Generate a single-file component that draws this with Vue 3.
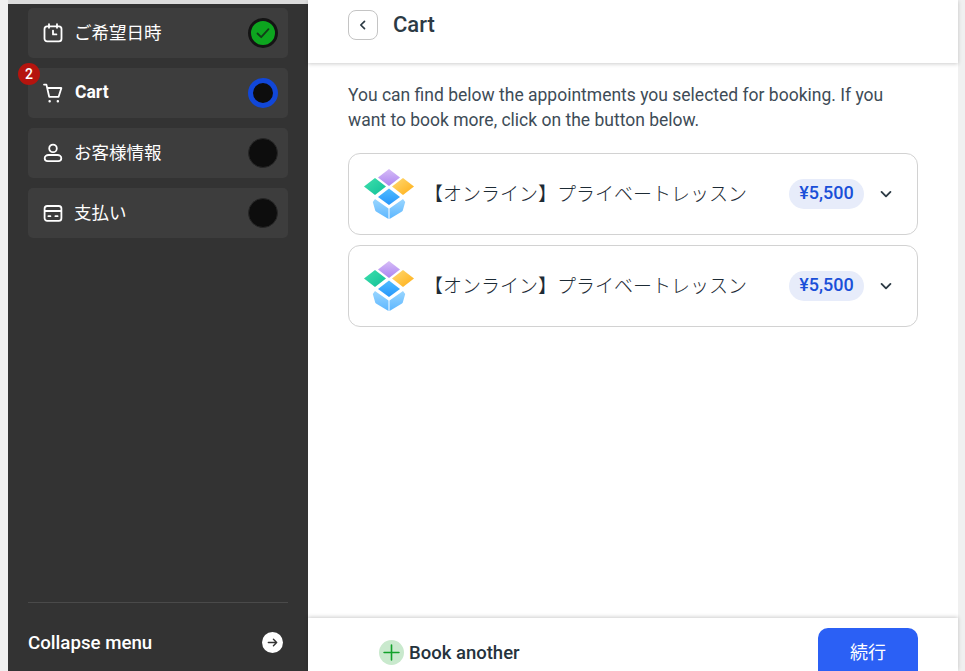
<template>
  <div class="page">
    <aside class="sidebar">
      <nav class="steps">
        <div v-for="step in steps" :key="step.label" class="step">
          <span v-if="step.badge" class="step__badge">{{ step.badge }}</span>
          <svg class="step__icon" viewBox="0 0 20 20" fill="none" stroke="currentColor" stroke-width="1.8" stroke-linecap="round" stroke-linejoin="round">
            <template v-if="step.icon === 'calendar'">
              <rect x="1.5" y="3.4" width="17" height="15" rx="2.6" />
              <path d="M6 1.2v3.6M14 1.2v3.6M10 7.6v3.8h3.4" />
            </template>
            <template v-else-if="step.icon === 'cart'">
              <path d="M1 1.6h2.4l2.8 12.2h9.400L18.400 5H4.400" />
              <path d="M6.600 18.200h.1M14.800 18.200h.1" stroke-width="2.400" />
            </template>
            <template v-else-if="step.icon === 'user'">
              <circle cx="10" cy="5.400" r="3.800" />
              <path d="M5.600 12h8.800c2.200 0 3.900 1.500 3.900 3.300 0 1.600-1.300 2.900-3 2.900H4.700c-1.700 0-3-1.300-3-2.900 0-1.800 1.700-3.300 3.900-3.300z" />
            </template>
            <template v-else>
              <rect x="1.600" y="3" width="16.800" height="14.800" rx="2.600" />
              <path d="M2 8h16M5.400 13.200h2M12.400 13.200h2.200" />
            </template>
          </svg>
          <span class="step__label" :class="{ 'step__label_active': step.state === 'active' }">{{ step.label }}</span>
          <span class="step__dot" :class="'step__dot_' + step.state">
            <svg v-if="step.state === 'done'" viewBox="0 0 20 20" fill="none" stroke="#123d18" stroke-width="1.800" stroke-linecap="round" stroke-linejoin="round">
              <path d="M4.500 10.500l3.700 3.700 7.300-8" />
            </svg>
          </span>
        </div>
      </nav>
      <div class="collapse">
        <span class="collapse__text">Collapse menu</span>
        <span class="collapse__icon">
          <svg viewBox="0 0 14 14" fill="none" stroke="#333" stroke-width="1.500" stroke-linecap="round" stroke-linejoin="round">
            <path d="M2.500 7h9M8 3.500L11.500 7 8 10.500" />
          </svg>
        </span>
      </div>
    </aside>

    <main class="main">
      <header class="header">
        <button class="back">
          <svg viewBox="0 0 12 12" fill="none" stroke="#2c3a44" stroke-width="1.700" stroke-linecap="round" stroke-linejoin="round">
            <path d="M7.500 2.300L3.800 6l3.700 3.700" />
          </svg>
        </button>
        <h1 class="header__title">Cart</h1>
      </header>

      <section class="content">
        <p class="intro">You can find below the appointments you selected for booking. If you want to book more, click on the button below.</p>
        <div class="cards">
          <div v-for="item in items" :key="item.id" class="card">
            <svg class="card__logo" viewBox="0 0 50 50">
              <defs>
                <linearGradient id="boxPurple" x1="0" y1="0" x2="0" y2="1">
                  <stop offset="0" stop-color="#d6bcf7" />
                  <stop offset="1" stop-color="#ad85f0" />
                </linearGradient>
                <linearGradient id="boxGreen" x1="0" y1="0" x2="1" y2="1">
                  <stop offset="0" stop-color="#3fe0ac" />
                  <stop offset="1" stop-color="#0fbf98" />
                </linearGradient>
                <linearGradient id="boxYellow" x1="0" y1="0" x2="1" y2="1">
                  <stop offset="0" stop-color="#ffdb75" />
                  <stop offset="1" stop-color="#ffad14" />
                </linearGradient>
                <linearGradient id="boxBlue" x1="0" y1="0" x2="0" y2="1">
                  <stop offset="0" stop-color="#4fbcff" />
                  <stop offset="1" stop-color="#2696fb" />
                </linearGradient>
                <linearGradient id="boxSide" x1="0" y1="0" x2="0" y2="1">
                  <stop offset="0" stop-color="#9ad6ff" />
                  <stop offset="1" stop-color="#5cb6ff" />
                </linearGradient>
              </defs>
              <path d="M25 0l11 8.500L25 17 14 8.500z" fill="url(#boxPurple)" />
              <path d="M11 9l11 8.500L11 26 0 17.500z" fill="url(#boxGreen)" />
              <path d="M39 9l11 8.500L39 26l-11-8.500z" fill="url(#boxYellow)" />
              <path d="M25 19.500L36 28 25 36 14 28z" fill="url(#boxBlue)" />
              <path d="M11 30l13.500 9.500V50L12 42.500q-.9-.6-1-1.700L8.800 33z" fill="url(#boxSide)" />
              <path d="M39 30l-13.500 9.500V50L38 42.500q.9-.6 1-1.700L41.200 33z" fill="url(#boxSide)" />
            </svg>
            <span class="card__name">{{ item.name }}</span>
            <span class="card__price">{{ item.price }}</span>
            <svg class="card__chevron" viewBox="0 0 12 12" fill="none" stroke="#2c3a44" stroke-width="1.600" stroke-linecap="round" stroke-linejoin="round">
              <path d="M2.200 4.200L6 8l3.800-3.800" />
            </svg>
          </div>
        </div>
      </section>

      <footer class="footer">
        <button class="another">
          <span class="another__icon">
            <svg viewBox="0 0 16 16" fill="none" stroke="#12a12a" stroke-width="1.500" stroke-linecap="round">
              <path d="M8 1v14M1 8h14" />
            </svg>
          </span>
          <span class="another__text">Book another</span>
        </button>
        <button class="next">続行</button>
      </footer>
    </main>
  </div>
</template>

<script setup>
const steps = [
  { label: 'ご希望日時', icon: 'calendar', state: 'done' },
  { label: 'Cart', icon: 'cart', state: 'active', badge: 2 },
  { label: 'お客様情報', icon: 'user', state: 'idle' },
  { label: '支払い', icon: 'card', state: 'idle' },
]

const items = [
  { id: 1, name: '【オンライン】プライベートレッスン', price: '¥5,500' },
  { id: 2, name: '【オンライン】プライベートレッスン', price: '¥5,500' },
]
</script>

<style>
html,
body {
  margin: 0;
  background: #f0f0f0;
}
</style>

<style scoped>
.page {
  display: flex;
  height: 671px;
  overflow: hidden;
  box-sizing: border-box;
  padding: 0 7px 0 8px;
  font-family: Roboto, "Noto Sans CJK JP", sans-serif;
  background: #f0f0f0;
}

.sidebar {
  display: flex;
  flex-direction: column;
  justify-content: space-between;
  flex: 0 0 300px;
  box-sizing: border-box;
  padding: 4px 20px 0;
  border-top: 4px solid #dcdcdc;
  background: #333333;
}

.steps {
  display: flex;
  flex-direction: column;
  gap: 10px;
}

.step {
  position: relative;
  display: flex;
  align-items: center;
  height: 50px;
  box-sizing: border-box;
  padding: 0 10px 0 15px;
  border-radius: 5px;
  background: #3d3d3d;
  color: #ffffff;
}

.step__badge {
  position: absolute;
  left: -10px;
  top: -5px;
  width: 22px;
  height: 22px;
  border-radius: 50%;
  background: #b5140e;
  color: #ffffff;
  font-size: 14px;
  font-weight: 500;
  line-height: 22px;
  text-align: center;
}

.step__icon {
  width: 20px;
  height: 20px;
  flex: none;
}

.step__label {
  flex: 1;
  margin-left: 11px;
  padding-bottom: 4px;
  font-size: 17.500px;
  color: #ffffff;
}

.step__label_active {
  margin-left: 12px;
  padding-bottom: 2px;
  font-weight: 700;
}

.step__dot {
  display: flex;
  align-items: center;
  justify-content: center;
  width: 30px;
  height: 30px;
  box-sizing: border-box;
  border-radius: 50%;
  background: #0d0d0d;
  border: 1px solid #262626;
}

.step__dot svg {
  width: 20px;
  height: 20px;
}

.step__dot_done {
  background: #0da51f;
  border: 3px solid #141414;
}

.step__dot_active {
  border: 5px solid #1147d8;
}

.collapse {
  display: flex;
  align-items: center;
  justify-content: space-between;
  height: 69px;
  flex: none;
  padding: 11px 5px 0 0;
  box-sizing: border-box;
  border-top: 1px solid #4a4a4a;
}

.collapse__text {
  font-size: 18.700px;
  font-weight: 500;
  color: #ffffff;
}

.collapse__icon {
  display: flex;
  align-items: center;
  justify-content: center;
  width: 21px;
  height: 21px;
  border-radius: 50%;
  background: #ffffff;
}

.collapse__icon svg {
  width: 13px;
  height: 13px;
}

.main {
  display: flex;
  flex-direction: column;
  flex: 1;
  min-width: 0;
  background: #ffffff;
}

.header {
  display: flex;
  align-items: center;
  flex: none;
  gap: 15px;
  height: 63px;
  box-sizing: border-box;
  padding: 0 40px 13px;
  box-shadow: 0 1px 4px rgba(0, 0, 0, 0.2);
}

.back {
  display: flex;
  align-items: center;
  justify-content: center;
  width: 30px;
  height: 30px;
  padding: 0;
  border: 1px solid #c4c4c4;
  border-radius: 8px;
  background: #ffffff;
}

.back svg {
  width: 12px;
  height: 12px;
}

.header__title {
  margin: 0 0 2px;
  font-size: 22px;
  font-weight: 500;
  color: #2c3a44;
}

.content {
  flex: 1;
  padding: 20px 40px 0;
}

.intro {
  margin: 0;
  font-size: 17.500px;
  line-height: 25px;
  color: #3e4c57;
}

.cards {
  display: flex;
  flex-direction: column;
  gap: 10px;
  margin-top: 20px;
}

.card {
  display: flex;
  align-items: center;
  height: 82px;
  box-sizing: border-box;
  padding: 0 24px 0 15px;
  border: 1px solid #d2d2d2;
  border-radius: 12px;
}

.card__logo {
  width: 50px;
  height: 50px;
  flex: none;
}

.card__name {
  flex: 1;
  margin-left: 10px;
  padding-bottom: 4px;
  font-size: 19px;
  font-weight: 300;
  color: #1d2b35;
}

.card__price {
  width: 75px;
  height: 30px;
  flex: none;
  border-radius: 15px;
  background: #e7ecfa;
  color: #1a4fd8;
  font-size: 18px;
  font-weight: 500;
  line-height: 28px;
  text-align: center;
}

.card__chevron {
  width: 14px;
  height: 14px;
  flex: none;
  margin-left: 15px;
}

.footer {
  display: flex;
  align-items: flex-start;
  justify-content: space-between;
  flex: none;
  height: 53px;
  box-sizing: border-box;
  padding: 10px 40px 0 71px;
  box-shadow: 0 -1px 4px rgba(0, 0, 0, 0.2);
}

.another {
  display: flex;
  align-items: center;
  gap: 5px;
  height: 26px;
  margin-top: 11px;
  padding: 0;
  border: none;
  background: none;
  font-family: inherit;
  font-size: 18.500px;
  font-weight: 500;
  color: #25333d;
}

.another__text {
  padding-top: 2px;
}

.another__icon {
  display: flex;
  align-items: center;
  justify-content: center;
  width: 25px;
  height: 25px;
  border-radius: 50%;
  background: #c9e9cd;
}

.another__icon svg {
  width: 17px;
  height: 17px;
}

.next {
  width: 100px;
  height: 56px;
  flex: none;
  padding: 0 0 11px;
  border: none;
  border-radius: 10px;
  background: #2b60f5;
  color: #ffffff;
  font-family: inherit;
  font-size: 18px;
}
</style>
